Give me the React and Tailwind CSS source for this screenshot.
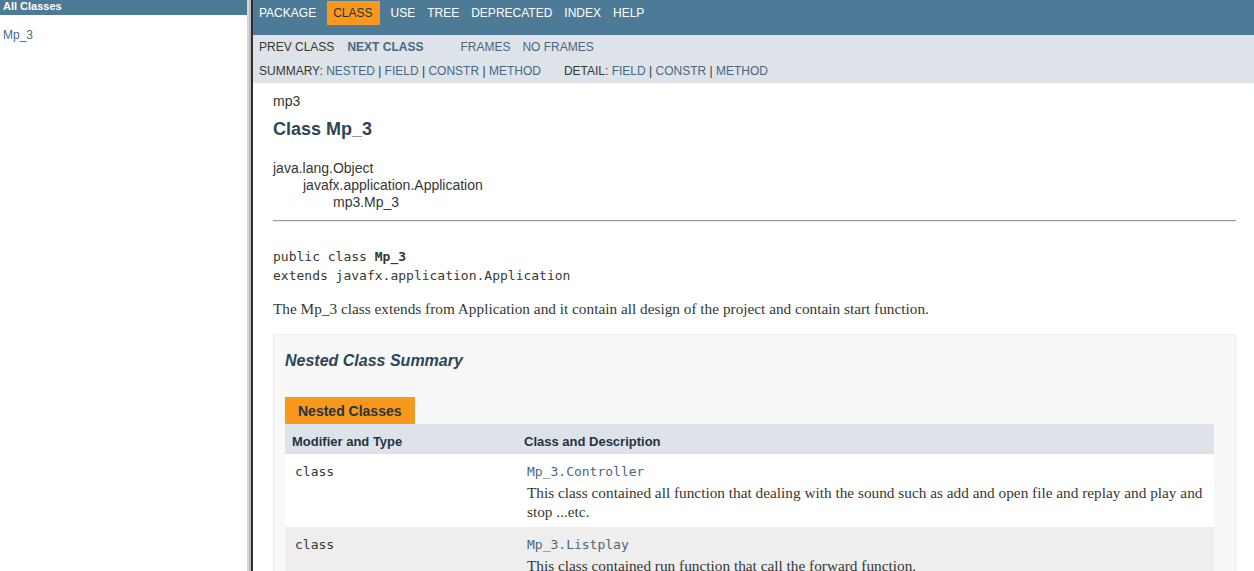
const sans = "font-['Liberation_Sans',Arial,sans-serif]";
const mono = "font-['DejaVu_Sans_Mono','Liberation_Mono',monospace]";
const serif = "font-['Liberation_Serif','DejaVu_Serif',serif]";

const topNav = ["PACKAGE", "CLASS", "USE", "TREE", "DEPRECATED", "INDEX", "HELP"];

const nested = [
  {
    name: "Mp_3.Controller",
    desc: "This class contained all function that dealing with the sound such as add and open file and replay and play and stop ...etc.",
  },
  {
    name: "Mp_3.Listplay",
    desc: "This class contained run function that call the forward function.",
  },
];

function Sep() {
  return <span className="text-[#353833]"> | </span>;
}

export default function App() {
  return (
    <div className={`h-[571px] w-[1254px] overflow-hidden flex bg-white ${sans} text-[#353833]`}>
      {/* left frame */}
      <div className="w-[247px] shrink-0 bg-white">
        <div className="h-[15px] bg-[#4D7A97] pl-[3px] text-[11px] leading-[12px] font-bold text-white">
          All Classes
        </div>
        <div className="pl-[3px] pt-[13px] text-[12px] leading-[14px] text-[#4A6782]">Mp_3</div>
      </div>

      {/* frame divider */}
      <div className="w-[2px] shrink-0 bg-[#d6d6d6]" />
      <div className="w-[2px] shrink-0 bg-[#bdbdbd]" />
      <div className="w-[2px] shrink-0 bg-[#2e2e2e]" />

      {/* right frame */}
      <div className="flex-1 min-w-0">
        {/* top nav */}
        <div className="h-[35px] bg-[#4D7A97] pt-[1px] pl-[6px] flex items-start gap-[12px] text-[12px] leading-[14px] text-white">
          {topNav.map((item) =>
            item === "CLASS" ? (
              <span key={item} className="bg-[#F8981D] text-[#253441] pl-[6px] pr-[7px] -ml-[1px] -mr-[1px] py-[5px]">
                {item}
              </span>
            ) : (
              <span key={item} className="py-[5px]">
                {item}
              </span>
            )
          )}
        </div>

        {/* sub nav */}
        <div className="bg-[#DEE3E9] pt-[5px] pb-[5px] pl-[6px] text-[12px] leading-[14px] flex flex-col gap-[10px]">
          <div className="flex">
            <span className="text-[#353833]">PREV CLASS</span>
            <span className="ml-[13px] font-bold text-[#4A6782]">NEXT CLASS</span>
            <span className="ml-[37px] text-[#4A6782]">FRAMES</span>
            <span className="ml-[12px] text-[#4A6782]">NO FRAMES</span>
          </div>
          <div className="flex whitespace-pre">
            <span>
              SUMMARY: <span className="text-[#4A6782]">NESTED</span>
              <Sep />
              <span className="text-[#4A6782]">FIELD</span>
              <Sep />
              <span className="text-[#4A6782]">CONSTR</span>
              <Sep />
              <span className="text-[#4A6782]">METHOD</span>
            </span>
            <span className="ml-[23px]">
              DETAIL: <span className="text-[#4A6782]">FIELD</span>
              <Sep />
              <span className="text-[#4A6782]">CONSTR</span>
              <Sep />
              <span className="text-[#4A6782]">METHOD</span>
            </span>
          </div>
        </div>

        {/* content */}
        <div className="pl-[20px] pr-[18px] pt-[10px]">
          <div className="text-[14px] leading-[17px]">mp3</div>
          <h2 className="mt-[9px] text-[18px] leading-[21px] font-bold text-[#2c4557]">Class Mp_3</h2>

          <div className="mt-[20px] text-[14px] leading-[17px]">
            <div>java.lang.Object</div>
            <div className="pl-[30px]">javafx.application.Application</div>
            <div className="pl-[60px]">mp3.Mp_3</div>
          </div>

          <div className="mt-[9px] border-t border-t-[#9a9a9a] border-b border-b-[#ececec]" />

          <div className={`mt-[25px] text-[13px] leading-[19px] ${mono}`}>
            <div>
              public class <span className="font-bold">Mp_3</span>
            </div>
            <div>extends javafx.application.Application</div>
          </div>

          <p className={`mt-[14px] text-[15.3px] leading-[19px] ${serif}`}>
            The Mp_3 class extends from Application and it contain all design of the project and contain start function.
          </p>

          {/* nested class summary */}
          <div className="mt-[16px] border border-[#ededed] bg-[#f8f8f8] pl-[11px] pr-[21px] pt-[16px]">
            <h3 className="text-[16px] leading-[19px] font-bold italic text-[#2c4557]">Nested Class Summary</h3>

            <div className="mt-[27px] flex">
              <span className="bg-[#F8981D] px-[13px] pt-[6px] pb-[5px] text-[14px] leading-[16px] font-bold text-[#253441]">
                Nested Classes
              </span>
            </div>

            <div className="grid grid-cols-[232px_1fr] bg-white">
              <div className="bg-[#DEE3E9] pl-[7px] pr-[3px] pt-[8px] pb-[3px] text-[13px] leading-[19px] font-bold text-[#253441]">
                Modifier and Type
              </div>
              <div className="bg-[#DEE3E9] pl-[7px] pr-[3px] pt-[8px] pb-[3px] text-[13px] leading-[19px] font-bold text-[#253441]">
                Class and Description
              </div>

              {nested.map((row, i) => {
                const bg = i % 2 === 0 ? "bg-white" : "bg-[#EEEEEF]";
                return [
                  <div key={row.name + "a"} className={`${bg} pl-[10px] pr-[3px] pt-[8px] pb-[3px]`}>
                    <code className={`${mono} text-[13px] leading-[19px] block`}>class</code>
                  </div>,
                  <div key={row.name + "b"} className={`${bg} pl-[10px] pr-[3px] pt-[8px] pb-[3px]`}>
                    <code className={`${mono} text-[13px] leading-[19px] block text-[#4A6782]`}>{row.name}</code>
                    <div className={`mt-[2px] mb-[3px] mr-[5px] text-[15.3px] leading-[19px] ${serif}`}>{row.desc}</div>
                  </div>,
                ];
              })}
            </div>
          </div>
        </div>
      </div>
    </div>
  );
}
